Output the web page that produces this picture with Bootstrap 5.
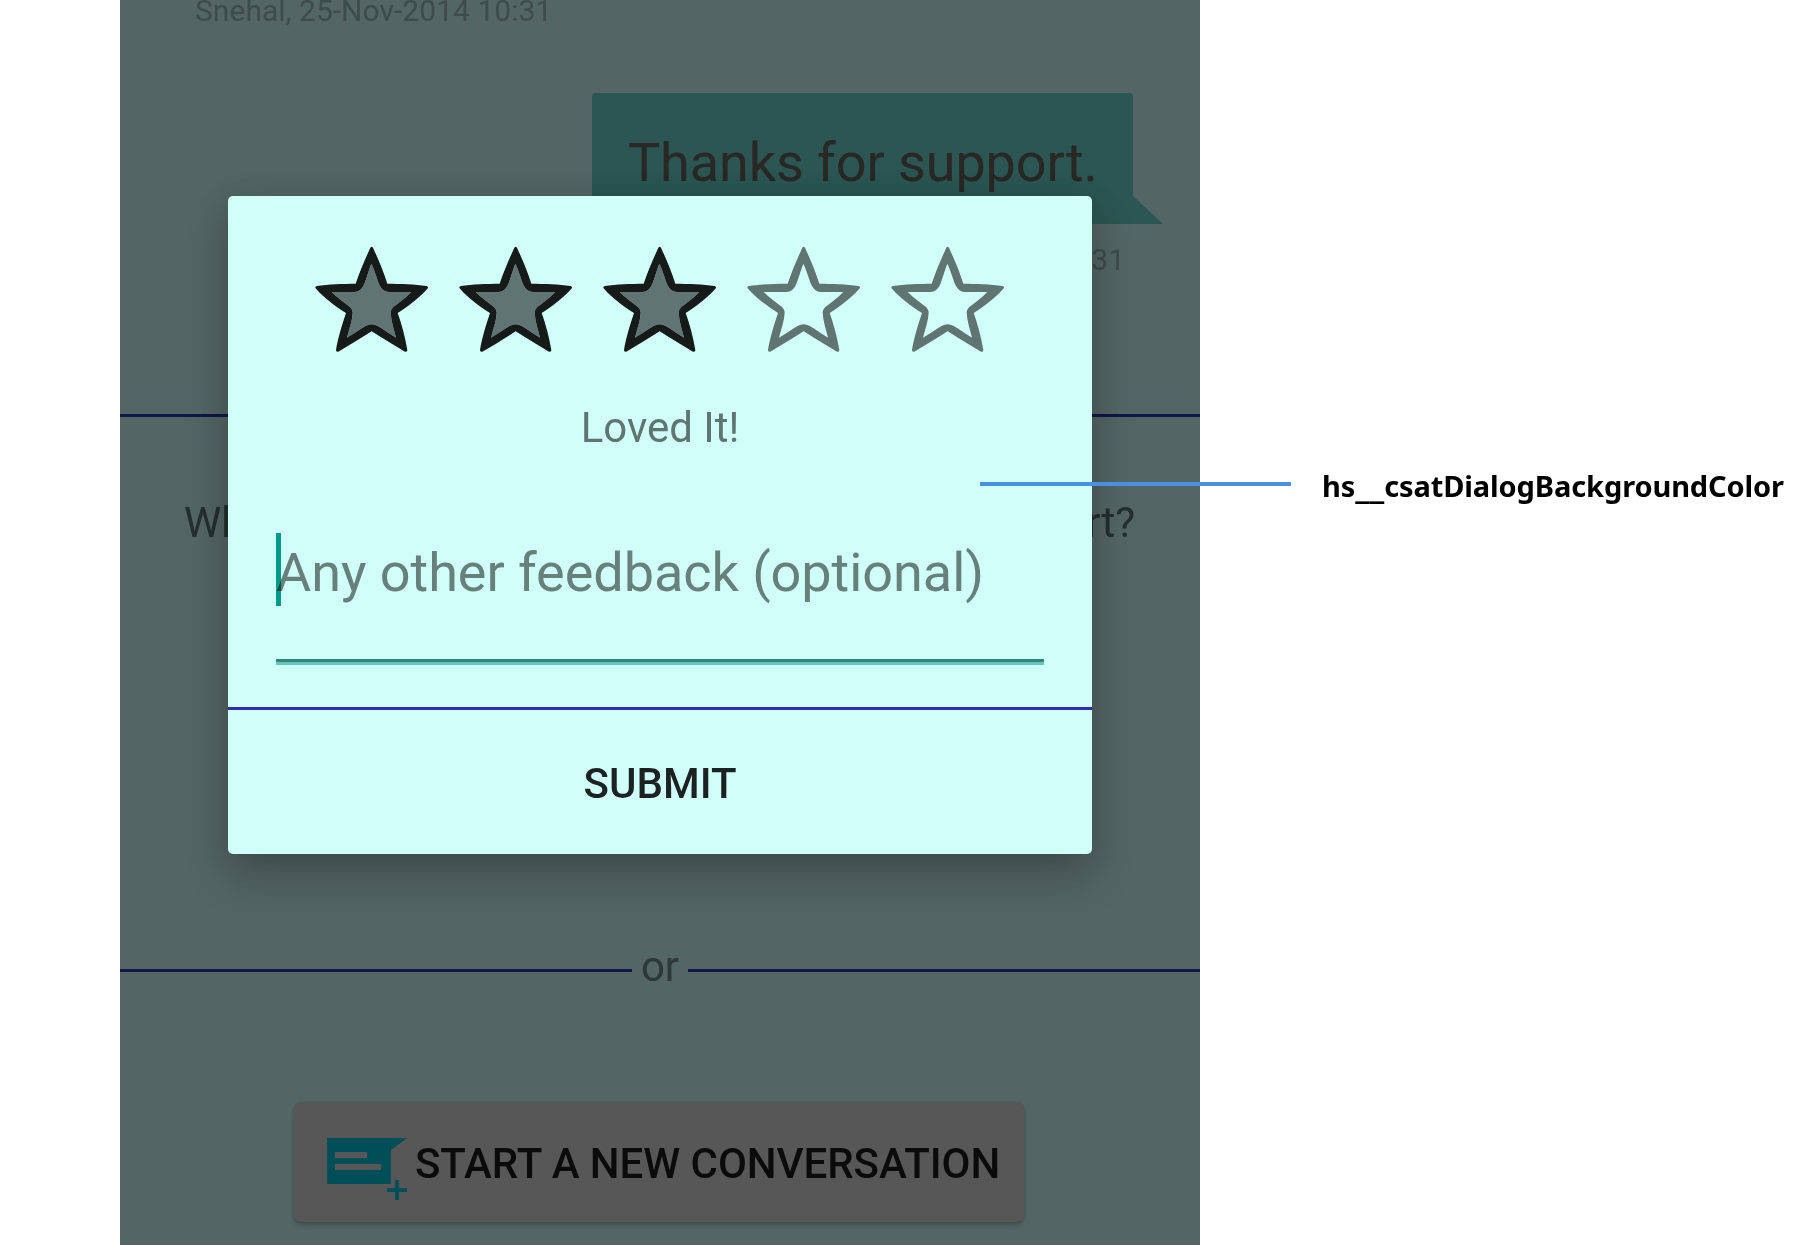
<!DOCTYPE html>
<html lang="en">
<head>
<meta charset="utf-8">
<meta name="viewport" content="width=device-width, initial-scale=1">
<title>Conversation feedback</title>
<link rel="stylesheet" href="https://cdn.jsdelivr.net/npm/bootstrap@5.3.0/dist/css/bootstrap.min.css">
<style>
  body { font-family: Roboto, sans-serif; background: #fff; height: 1245px; overflow: hidden; }
  .phone { width: 1080px; height: 1245px; margin-left: 120px; background: #536663; }
  .stamp { font-size: 30px; line-height: 36px; color: #3e4c4a; }
  .stamp-in { margin: -7px 0 0 75px; letter-spacing: .03px; }
  .stamp-out { margin: 18px 75px 0 0; }
  .bubble { width: 541px; height: 131px; margin: 64px 67px 0 0; padding: 38px 0 0 36px; background: #2b5653; border-radius: 4px 4px 0 0; font-size: 54px; line-height: 64px; letter-spacing: -.1px; color: #292824; white-space: nowrap; }
  .bubble-tail { right: -30px; bottom: 0; width: 31px; height: 28px; background: #2b5653; clip-path: polygon(0 0, 1px 0, 100% 100%, 0 100%); }
  .rule { height: 3px; background: #14154a; }
  .rule-top { margin-top: 136px; }
  .question { margin: 81px 65px 0 64px; font-size: 42px; line-height: 50px; color: #252f2d; white-space: nowrap; text-align-last: justify; }
  .or-row { margin-top: 394px; font-size: 42px; line-height: 50px; color: #2e3836; }
  .or-row .rule { margin-top: 27px; }
  .or-word { width: 56px; }
  .new-btn { width: 730px; height: 120px; margin: 110px 0 0 174px; padding: 0 0 0 33px; background: #575757; border-radius: 7px; border: 0; color: #0b0b0b; font-size: 42px; font-weight: 500; line-height: 50px; box-shadow: 0 3px 4px rgba(0,0,0,.22), 0 0 2px rgba(0,0,0,.1); white-space: nowrap; }
  .new-btn svg { margin: 13px 8px 0 0; }
  .new-btn-text { padding-top: 4px; letter-spacing: -.06px; }
  .dialog { left: 108px; top: 196px; width: 864px; height: 658px; background: #d0fff9; border-radius: 5px; box-shadow: 0 24px 44px rgba(0,0,0,.22), 0 0 30px rgba(0,0,0,.11); }
  .stars { padding: 34.5px 72px 0; height: 174px; }
  .star { width: 144px; height: 140px; }
  .verdict { font-size: 42px; line-height: 50px; color: #607572; margin-top: 33px; }
  .feedback { margin: 80px 48px 0 48px; height: 174px; }
  .feedback-text { padding-top: 8px; font-size: 54px; line-height: 64px; letter-spacing: -.05px; color: #68807c; white-space: nowrap; }
  .caret { left: 0; top: 0; width: 5px; height: 73px; background: #009a8b; mix-blend-mode: multiply; }
  .field-line { height: 6px; margin-top: 54px; background: linear-gradient(#31857b 50%, #62c6b9 50%); }
  .divide { height: 3px; background: #2f2db4; }
  .submit { padding: 3px 0 0; border: 0; color: #1c2221; font-size: 42px; font-weight: 500; line-height: 50px; }
  .pointer { left: 980px; top: 482px; width: 311px; height: 4px; background: #4a90e2; }
  .pointer-label { left: 1322px; top: 466px; font: 700 29px/40px "Noto Sans", sans-serif; letter-spacing: -.12px; color: #000; }
  .pointer-label span { font-family: "DejaVu Sans", sans-serif; line-height: 1; letter-spacing: 0; }
</style>
</head>
<body class="position-relative">
<svg width="0" height="0" class="position-absolute">
  <symbol id="star-inner" viewBox="0 0 432 420"><path d="M214 98C225 120 232 150 240 165Q248 182 266 183L334 183C318 200 300 213 285 224Q272 233 272 245C273 270 282 295 288 320C270 308 250 295 232 284Q215 275 198 284C180 295 160 308 141 320C147 295 157 270 158 245Q158 233 145 224C130 213 112 200 95 183L164 183Q182 182 190 165C198 150 205 120 214 98Z"/></symbol>
  <symbol id="star-rim" viewBox="0 0 432 420"><path fill-rule="evenodd" d="M211 50Q215 45 219 50C235 85 250 120 262 158C300 158 345 160 380 165Q387 168 382 173C355 203 325 225 293 246C305 280 315 315 322 357Q322 364 315 362C285 345 250 323 215 301C180 323 145 345 115 362Q108 364 108 357C115 315 127 280 138 246C105 225 75 203 48 173Q43 168 50 165C85 160 130 158 167 158C180 120 195 85 211 50ZM214 98C225 120 232 150 240 165Q248 182 266 183L334 183C318 200 300 213 285 224Q272 233 272 245C273 270 282 295 288 320C270 308 250 295 232 284Q215 275 198 284C180 295 160 308 141 320C147 295 157 270 158 245Q158 233 145 224C130 213 112 200 95 183L164 183Q182 182 190 165C198 150 205 120 214 98Z"/></symbol>
</svg>
<main class="phone position-relative d-flex flex-column">
  <div class="stamp stamp-in">Snehal, 25-Nov-2014 10:31</div>
  <div class="bubble position-relative align-self-end">Thanks for support.<span class="bubble-tail position-absolute"></span></div>
  <div class="stamp stamp-out align-self-end">Me, 25-Nov-2014 10:31</div>
  <div class="rule rule-top"></div>
  <div class="question">What did you think about our customer support?</div>
  <div class="or-row d-flex align-items-start">
    <div class="rule flex-fill"></div><div class="or-word text-center">or</div><div class="rule flex-fill"></div>
  </div>
  <button class="new-btn d-flex align-items-center" type="button">
    <svg width="80" height="62" viewBox="0 0 80 62" fill="#004e58"><path fill-rule="evenodd" d="M0 0H80L64 12V46H0ZM8 14V20H40V14ZM8 26V32H54V26Z"/><path d="M68 42H72V50H80V54H72V62H68V54H60V50H68Z"/></svg>
    <span class="new-btn-text">START A NEW CONVERSATION</span>
  </button>

  <section class="dialog position-absolute d-flex flex-column">
    <div class="stars d-flex">
      <svg class="star"><use href="#star-inner" fill="#607572"/><use href="#star-rim" fill="#161a19"/></svg>
      <svg class="star"><use href="#star-inner" fill="#607572"/><use href="#star-rim" fill="#161a19"/></svg>
      <svg class="star"><use href="#star-inner" fill="#607572"/><use href="#star-rim" fill="#161a19"/></svg>
      <svg class="star"><use href="#star-rim" fill="#607572"/></svg>
      <svg class="star"><use href="#star-rim" fill="#607572"/></svg>
    </div>
    <div class="verdict text-center">Loved It!</div>
    <div class="feedback position-relative flex-shrink-0">
      <div class="feedback-text">Any other feedback (optional)</div>
      <span class="caret position-absolute"></span>
      <div class="field-line"></div>
    </div>
    <div class="divide"></div>
    <button class="submit btn flex-fill rounded-0" type="button">SUBMIT</button>
  </section>
</main>
<div class="pointer position-absolute"></div>
<div class="pointer-label position-absolute text-nowrap">hs<span>__</span>csatDialogBackgroundColor</div>
<script src="https://cdn.jsdelivr.net/npm/bootstrap@5.3.0/dist/js/bootstrap.bundle.min.js"></script>
</body>
</html>
